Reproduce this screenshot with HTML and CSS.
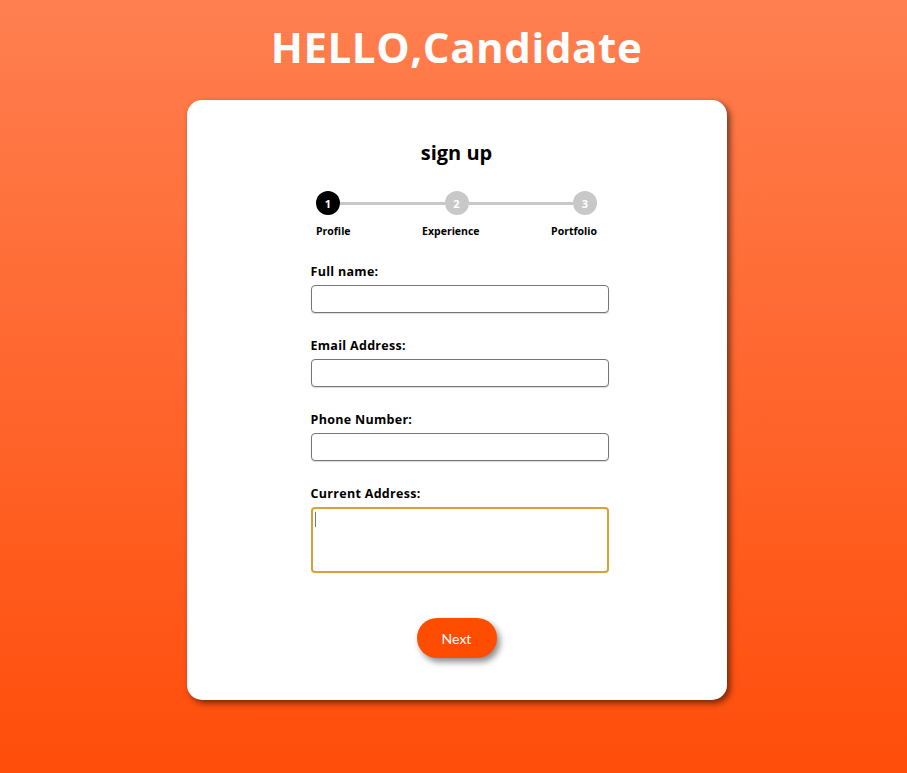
FILE: index.html
```html
<!DOCTYPE html>
<html>
<head>
<meta charset="utf-8">
<link rel="stylesheet" href="styles.css">
</head>
<body>
<div class="page">
  <h1 class="title">HELLO,Candidate</h1>
  <div class="card">
    <h2 class="card-title">sign up</h2>
    <div class="stepper">
      <div class="steps">
        <span class="dot active">1</span>
        <span class="line"></span>
        <span class="dot">2</span>
        <span class="line"></span>
        <span class="dot">3</span>
      </div>
      <div class="step-labels">
        <span>Profile</span>
        <span>Experience</span>
        <span>Portfolio</span>
      </div>
    </div>
    <form class="form">
      <label class="field">
        <span class="label">Full name:</span>
        <input class="input" type="text">
      </label>
      <label class="field">
        <span class="label">Email Address:</span>
        <input class="input" type="text">
      </label>
      <label class="field">
        <span class="label">Phone Number:</span>
        <input class="input" type="text">
      </label>
      <label class="field">
        <span class="label">Current Address:</span>
        <span class="textarea"><span class="caret"></span></span>
      </label>
      <div class="actions">
        <button type="button" class="btn">Next</button>
      </div>
    </form>
  </div>
</div>
</body>
</html>
```

FILE: styles.css
```css
* { box-sizing: border-box; }
html, body { margin: 0; padding: 0; }
body {
  font-family: "Open Sans", "DejaVu Sans", sans-serif;
  background: linear-gradient(180deg, #ff7f50 0%, #ff4d0a 100%);
  min-height: 773px;
}
.page {
  display: flex;
  flex-direction: column;
  align-items: center;
  padding-top: 21px;
  padding-left: 6px;
}
.title {
  margin: 0;
  color: #fff;
  font-family: "Open Sans", sans-serif;
  font-weight: 700;
  font-size: 42px;
  line-height: 52px;
  letter-spacing: 0.6px;
}
.card {
  margin-top: 27px;
  width: 540px;
  height: 600px;
  background: #fff;
  border-radius: 15px;
  box-shadow: 3px 3px 6px rgba(0,0,0,0.55);
  display: flex;
  flex-direction: column;
  align-items: center;
  padding-top: 40px;
}
.card-title {
  margin: 0;
  font-size: 20px;
  line-height: 26px;
  font-weight: 700;
  color: #000;
}
.stepper {
  margin-top: 25px;
  width: 281px;
}
.steps {
  display: flex;
  align-items: center;
}
.dot {
  width: 24px;
  height: 24px;
  border-radius: 50%;
  background: #c8c8c8;
  color: #fff;
  font-size: 11px;
  font-weight: 700;
  display: flex;
  align-items: center;
  justify-content: center;
  flex: none;
}
.dot.active { background: #000; }
.line {
  flex: 1;
  height: 3px;
  background: #c8c8c8;
}
.step-labels {
  margin-top: 9px;
  display: flex;
  justify-content: space-between;
  font-size: 10.5px;
  line-height: 14px;
  font-weight: 700;
  color: #000;
}
.form {
  margin-top: 25px;
  width: 298px;
  display: flex;
  flex-direction: column;
  margin-left: 6px;
}
.field {
  display: flex;
  flex-direction: column;
  margin-bottom: 24px;
}
.label {
  font-size: 12.5px;
  font-weight: 700;
  color: #000;
  line-height: 18px;
  margin-bottom: 4px;
  letter-spacing: 0.3px;
}
.input {
  height: 28px;
  border: 1px solid #767676;
  border-radius: 4px;
  outline: none;
  font: inherit;
  box-shadow: 0 1px 1px rgba(0,0,0,0.15);
}
.textarea {
  display: block;
  height: 66px;
  border: 2px solid #d9a03a;
  border-radius: 4px;
  padding: 3px 2px;
}
.caret {
  display: block;
  width: 1px;
  height: 15px;
  background: #777;
}
.actions {
  display: flex;
  justify-content: center;
  margin-top: 21px;
  margin-left: -6px;
}
.btn {
  width: 80px;
  height: 40px;
  border: none;
  border-radius: 20px;
  background: #ff4d00;
  color: #fff;
  font-family: "Lato", sans-serif;
  font-size: 14px;
  box-shadow: 3px 4px 6px rgba(0,0,0,0.45);
}
```
